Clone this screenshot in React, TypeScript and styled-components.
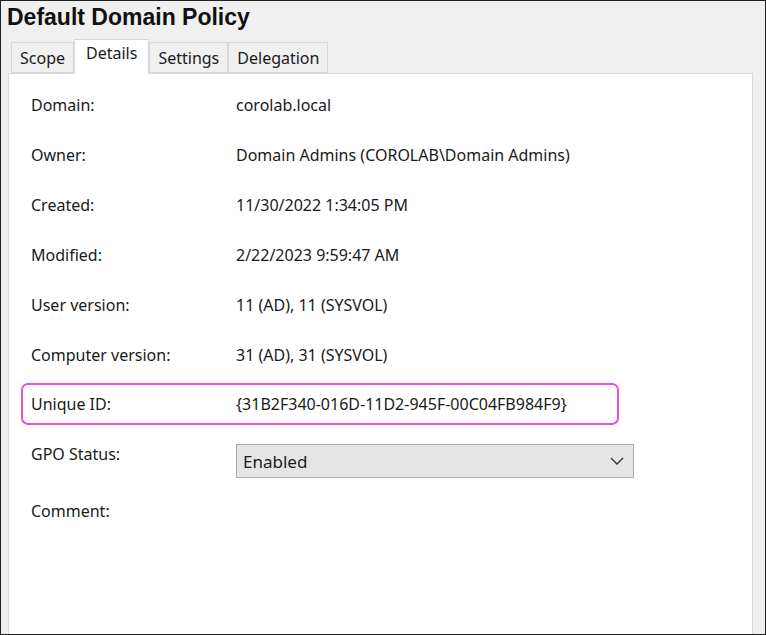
import styled, { createGlobalStyle } from "styled-components";

const Global = createGlobalStyle`
  html, body { margin: 0; padding: 0; background: #f0f0f0; }
  body { font-family: "Noto Sans", "Open Sans", sans-serif; color: #1a1a1a; }
`;

const rows: [string, string][] = [
  ["Domain:", "corolab.local"],
  ["Owner:", "Domain Admins (COROLAB\\Domain Admins)"],
  ["Created:", "11/30/2022 1:34:05 PM"],
  ["Modified:", "2/22/2023 9:59:47 AM"],
  ["User version:", "11 (AD), 11 (SYSVOL)"],
  ["Computer version:", "31 (AD), 31 (SYSVOL)"],
];

const tabs = ["Scope", "Details", "Settings", "Delegation"];

const App = () => {
  return (
    <>
      <Global />
      <Frame>
        <Title>Default Domain Policy</Title>
        <TabBar>
          {tabs.map((t) => (
            <Tab key={t} $active={t === "Details"}>
              {t}
            </Tab>
          ))}
        </TabBar>
        <Panel>
          {rows.map(([l, v]) => (
            <Row key={l}>
              <Label>{l}</Label>
              <Value>{v}</Value>
            </Row>
          ))}
          <Highlight>
            <Label>Unique ID:</Label>
            <Value>{"{31B2F340-016D-11D2-945F-00C04FB984F9}"}</Value>
          </Highlight>
          <Row $gap={4}>
            <Label>GPO Status:</Label>
            <Select>
              <span>Enabled</span>
              <svg width="16" height="10" viewBox="0 0 16 10">
                <path d="M2 2 L8 8 L14 2" fill="none" stroke="#333" strokeWidth="1.3" />
              </svg>
            </Select>
          </Row>
          <Row $gap={7}>
            <Label>Comment:</Label>
          </Row>
        </Panel>
      </Frame>
    </>
  );
};

const Frame = styled.div`
  width: 766px;
  height: 635px;
  box-sizing: border-box;
  border: 1px solid #222;
  display: flex;
  flex-direction: column;
  background: #f0f0f0;
`;

const Title = styled.h1`
  margin: 0;
  padding: 3px 0 0 6px;
  height: 34px;
  box-sizing: border-box;
  font-family: "Liberation Sans", Arial, sans-serif;
  font-size: 23px;
  font-weight: bold;
  color: #111;
`;

const TabBar = styled.div`
  display: flex;
  align-items: flex-end;
  padding-left: 10px;
  height: 38px;
`;

const Tab = styled.div<{ $active?: boolean }>`
  height: ${({ $active }) => ($active ? "35px" : "31px")};
  box-sizing: border-box;
  padding: ${({ $active }) => ($active ? "2px 11px 0" : "4px 8px 0")};
  border: 1px solid #d9d9d9;
  border-bottom: ${({ $active }) => ($active ? "none" : "1px solid #d9d9d9")};
  background: ${({ $active }) => ($active ? "#fff" : "#f0f0f0")};
  font-size: 16px;
  margin-bottom: ${({ $active }) => ($active ? "-1px" : "0")};
  position: relative;
  z-index: ${({ $active }) => ($active ? 1 : 0)};
`;

const Panel = styled.div`
  flex: 1;
  margin: 0 12px 0 7px;
  background: #fff;
  border: 1px solid #d9d9d9;
  border-bottom: none;
  padding: 6px 0 0 13px;
  display: flex;
  flex-direction: column;
`;

const Row = styled.div<{ $gap?: number }>`
  display: flex;
  align-items: center;
  height: 50px;
  flex-shrink: 0;
  padding-left: 9px;
  margin-top: ${({ $gap }) => $gap ?? 0}px;
`;

const Highlight = styled.div`
  display: flex;
  align-items: center;
  flex-shrink: 0;
  margin: 3px 0 0 -1px;
  width: 598px;
  height: 42px;
  box-sizing: border-box;
  border: 2px solid #f050d0;
  border-radius: 7px;
  padding-left: 8px;
`;

const Label = styled.div`
  width: 205px;
  font-size: 16px;
  color: #1a1a1a;
`;

const Value = styled.div`
  font-size: 16px;
  color: #1a1a1a;
`;

const Select = styled.div`
  width: 398px;
  height: 34px;
  box-sizing: border-box;
  margin-top: 14px;
  background: #e5e5e5;
  border: 1px solid #adadad;
  display: flex;
  align-items: center;
  justify-content: space-between;
  padding: 0 8px 0 6px;
  font-size: 17px;
`;

export default App;
